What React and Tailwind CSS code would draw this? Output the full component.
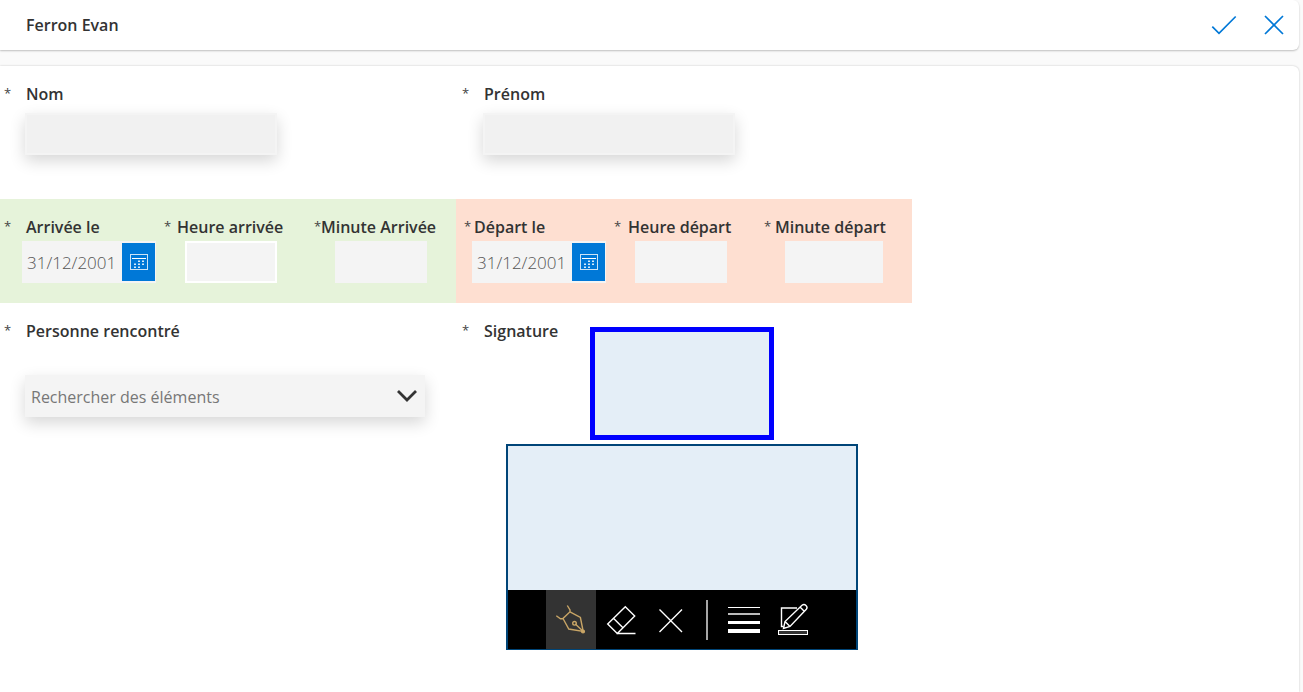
import React from "react";

const labelText = "text-base leading-6 font-semibold text-[#333333]";
const fieldBase = "block h-[42px] border-2 px-1 text-base text-[#333333] outline-none";
const fieldShadow = "shadow-[0_6px_16px_rgba(0,0,0,0.16)]";

function Label({ htmlFor, star = "w-[22px]", children }) {
  return (
    <div className="flex h-6 pl-1 whitespace-nowrap">
      <span aria-hidden="true" className={`${star} shrink-0 text-[13px] leading-[22px] text-[#444444]`}>*</span>
      <label htmlFor={htmlFor} className={labelText}>{children}</label>
    </div>
  );
}

function NameField({ id, label }) {
  return (
    <div className="w-[458px] pt-4">
      <Label htmlFor={id}>{label}</Label>
      <input
        id={id}
        type="text"
        className={`${fieldBase} ${fieldShadow} mt-[7px] ml-[25px] w-[252px] border-[#f4f4f4] bg-[#f1f1f1]`}
      />
    </div>
  );
}

function CalendarIcon() {
  return (
    <svg viewBox="0 0 18 16" className="h-4 w-[18px]" fill="none" stroke="#fff" aria-hidden="true">
      <rect x="0.5" y="0.5" width="17" height="15" strokeOpacity="0.8" />
      <path d="M2 4.5h14" />
      <g fill="#fff" fillOpacity="0.85" stroke="none">
        <path d="M8 6.5h2V8H8zM12 6.5h2V8h-2zM4 9.5h2V11H4zM8 9.5h2V11H8zM12 9.5h2V11h-2zM4 12.5h2V14H4zM8 12.5h2V14H8z" />
      </g>
    </svg>
  );
}

function DateField({ id, label, star, indent, width }) {
  return (
    <div className={width}>
      <Label htmlFor={id} star={star}>{label}</Label>
      <div className={`${indent} mt-[2px] flex h-[42px] w-[134px] bg-[#f4f4f4] py-[2px] pr-px`}>
        <input
          id={id}
          type="text"
          placeholder="31/12/2001"
          className="w-[100px] bg-transparent pt-[2px] pl-[5px] text-[17px] font-light text-[#333333] outline-none placeholder:text-[#555555]"
        />
        <button type="button" aria-label="Ouvrir le calendrier" className="flex w-[33px] items-center justify-center bg-[#0078d7]">
          <CalendarIcon />
        </button>
      </div>
    </div>
  );
}

function TimeField({ id, label, star, width, field }) {
  return (
    <div className={width}>
      <Label htmlFor={id} star={star}>{label}</Label>
      <input id={id} type="text" className={`${fieldBase} mt-[2px] ml-[25px] bg-[#f4f4f4] ${field}`} />
    </div>
  );
}

function Tool({ label, active, children }) {
  return (
    <button type="button" aria-label={label} className={`h-full w-[50px] ${active ? "bg-[#333333]" : ""}`}>
      <svg viewBox="0 0 50 59" className="h-[59px] w-[50px]" fill="none" stroke="#fff" strokeWidth="1.4" aria-hidden="true">
        {children}
      </svg>
    </button>
  );
}

function SignaturePad() {
  return (
    <div className="mt-1 ml-12 w-[352px] border-2 border-b border-[#004578] bg-[#e4eef7]">
      <canvas aria-label="Zone de signature" className="block h-36 w-full" />
      <div className="flex h-[59px] items-center bg-black pl-[38px]">
        <Tool label="Stylo" active>
          <g stroke="#c8a566">
            <path d="M24 21.8l10.4 5.7 2.8 14L22.8 39l-5.8-10.5zM21.3 15.5l2.7 4.5v1.8M10.3 25.8l4.2 3H17M29.3 34l8 7.5" />
            <circle cx="28.5" cy="33.3" r="1.8" />
            <circle cx="37" cy="41.5" r="1.4" fill="#c8a566" />
          </g>
        </Tool>
        <Tool label="Gomme">
          <path d="M29.3 16.7l9.4 9.3-17.4 17.4-9.6-9.4zM17.7 28.6l9 8.9M20.5 43.5h19" />
        </Tool>
        <Tool label="Effacer">
          <path d="M13.5 19.5L36 42M36 19.5L13.5 42" />
        </Tool>
        <span aria-hidden="true" className="mr-[11px] ml-[10px] h-10 w-[2px] bg-[#a6a6a6]" />
        <Tool label="Épaisseur">
          <g fill="#fff" stroke="none">
            <path d="M9 17h32v1H9z" />
            <path d="M9 23h32v2H9z" fill="#bbb" />
            <path d="M9 31h32v3H9zM9 39h32v4H9z" />
          </g>
        </Tool>
        <Tool label="Couleur">
          <path d="M28 18H12.5v18.5h2" />
          <path d="M14.5 38.5l1.5-7L33 15.3c2.7-2.2 6.5 1.2 4.3 4L21 36.5zM16 31.5l5 5M31 17l4.5 4.5" />
          <rect x="9.5" y="40.5" width="29" height="4" fill="#333" strokeWidth="1" />
        </Tool>
      </div>
    </div>
  );
}

export default function App() {
  return (
    <div className="flex min-h-screen flex-col bg-[#fafafa] pr-1 font-['Open_Sans','Noto_Sans',sans-serif]">
      <header className="flex h-[50px] items-center rounded-r-md bg-white pl-[26px] shadow-[0_1px_2px_rgba(0,0,0,0.24)]">
        <h1 className={`${labelText} flex-1`}>Ferron Evan</h1>
        <button type="button" aria-label="Valider" className="h-[50px] w-[50px]">
          <svg viewBox="0 0 50 50" fill="none" stroke="#0078d7" strokeWidth="1.7" aria-hidden="true">
            <path d="M13.3 26.7l6.7 6.6L36.7 16.5" />
          </svg>
        </button>
        <button type="button" aria-label="Fermer" className="h-[50px] w-[50px]">
          <svg viewBox="0 0 50 50" fill="none" stroke="#0078d7" strokeWidth="1.7" aria-hidden="true">
            <path d="M16 16l18 18M34 16L16 34" />
          </svg>
        </button>
      </header>

      <main className="mt-4 flex-1 rounded-tr-md bg-white shadow-[0_0_2px_rgba(0,0,0,0.24)]">
        <form onSubmit={(e) => e.preventDefault()}>
          <div className="flex flex-wrap pb-11">
            <NameField id="nom" label="Nom" />
            <NameField id="prenom" label="Prénom" />
          </div>

          <div className="flex flex-wrap">
            <div className="flex w-[456px] bg-[#e6f3da] pt-4 pb-5">
              <DateField id="arrivee" label="Arrivée le" width="w-[160px]" star="w-[22px]" indent="ml-[22px]" />
              <TimeField id="heure-arrivee" label="Heure arrivée" width="w-[150px]" star="w-[13px]" field="w-[92px] border-white" />
              <TimeField id="minute-arrivee" label="Minute Arrivée" width="w-[146px]" star="w-[7px]" field="w-[92px] border-[#f4f4f4]" />
            </div>
            <div className="flex w-[456px] bg-[#fedfd1] pt-4 pb-5 pl-1">
              <DateField id="depart" label="Départ le" width="w-[150px]" star="w-[10px]" indent="ml-3" />
              <TimeField id="heure-depart" label="Heure départ" width="w-[150px]" star="w-[14px]" field="w-[92px] border-[#f4f4f4]" />
              <TimeField id="minute-depart" label="Minute départ" width="w-[152px]" star="w-[11px]" field="w-[98px] border-[#f4f4f4]" />
            </div>
          </div>

          <div className="flex flex-wrap">
            <div className="w-[458px] pt-4">
              <Label htmlFor="personne">Personne rencontré</Label>
              <div className={`${fieldShadow} mt-8 ml-[25px] grid h-[42px] w-[400px] items-center bg-[#f4f4f4]`}>
                <select
                  id="personne"
                  defaultValue=""
                  className="col-start-1 row-start-1 h-full w-full appearance-none bg-transparent pt-[2px] pl-[6px] text-base text-[#777777] outline-none"
                >
                  <option value="">Rechercher des éléments</option>
                </select>
                <svg viewBox="0 0 20 12" className="pointer-events-none col-start-1 row-start-1 mr-2 h-3 w-5 justify-self-end" fill="none" stroke="#333" strokeWidth="2.8" aria-hidden="true">
                  <path d="M1 1l9 9 9-9" />
                </svg>
              </div>
            </div>

            <div>
              <div className="flex">
                <div className="w-[132px] pt-4">
                  <Label htmlFor="signature">Signature</Label>
                </div>
                <output id="signature" className="mt-6 block h-[113px] w-[184px] border-5 border-[#0000ff] bg-[#e4eef7]" />
              </div>
              <SignaturePad />
            </div>
          </div>
        </form>
      </main>
    </div>
  );
}
